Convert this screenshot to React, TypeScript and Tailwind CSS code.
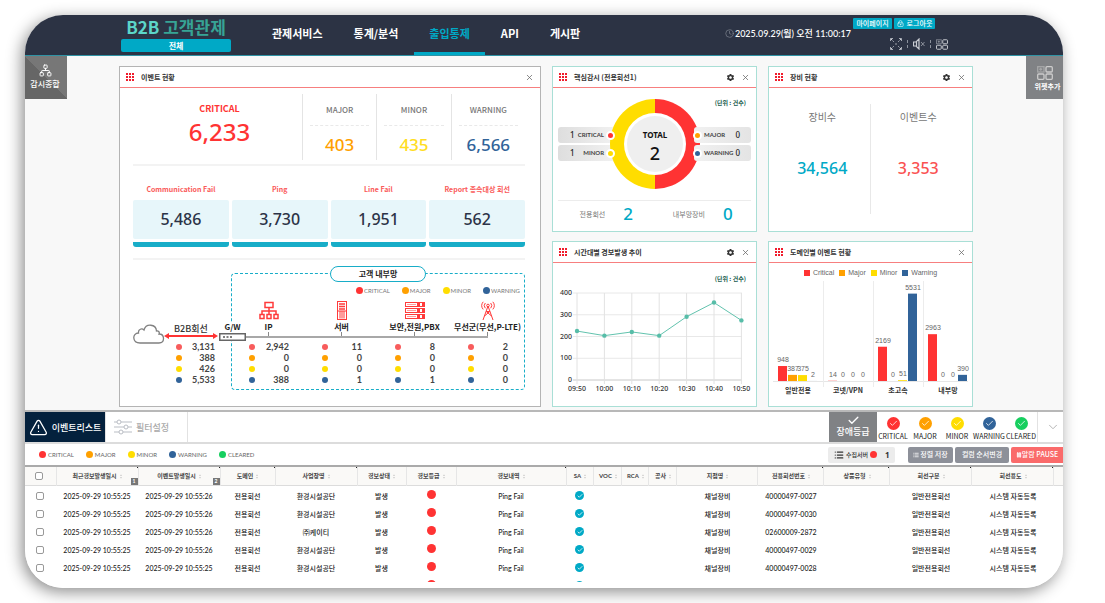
import { useState } from "react";
import type { ReactNode } from "react";
import clsx from "clsx";
import { Check, ChevronDown, Clock, List, LockKeyhole, Network, Pause, TriangleAlert, X } from "lucide-react";
import { MdSettings } from "react-icons/md";

const NUM = "font-['Noto_Sans','Noto_Sans_CJK_KR',sans-serif]";
const TXT = "font-['Lato','Noto_Sans_CJK_KR',sans-serif]";

const NAV = ["관제서비스", "통계/분석", "출입통제", "API", "게시판"];

const LEVELS = [
  { name: "CRITICAL", dot: "bg-[#ff3333]", soft: "bg-[#f85c5c]", fill: "#ff3333" },
  { name: "MAJOR", dot: "bg-[#ffa000]", soft: "bg-[#ffa000]", fill: "#ffa000" },
  { name: "MINOR", dot: "bg-[#ffdd00]", soft: "bg-[#ffdd00]", fill: "#ffdd00" },
  { name: "WARNING", dot: "bg-[#316399]", soft: "bg-[#316399]", fill: "#316399" },
  { name: "CLEARED", dot: "bg-[#17cf5f]", soft: "bg-[#17cf5f]", fill: "#17cf5f" },
];

function Panel({ title, gear, gray, children }: { title: string; gear?: boolean; gray?: boolean; children: ReactNode }) {
  return (
    <section className={clsx("flex min-h-[166px] flex-col border bg-white", gray ? "border-[#b4b4b4]" : "border-[#a9dfd6]")}>
      <header className="flex h-[21px] shrink-0 items-center border-b border-[#f77f7f] px-1.5">
        <svg viewBox="0 0 8 8" className="mr-[7px] size-2 text-[#f01c2c]" fill="currentColor">
          {[0, 3, 6].map((y) => [0, 3, 6].map((x) => <rect key={`${x}-${y}`} x={x} y={y} width="2" height="2" />))}
        </svg>
        <h2 className="flex-1 text-[7px] font-bold text-[#333]">{title}</h2>
        {gear && (
          <button type="button" aria-label="설정" className="mr-1.5 text-[#333]">
            <MdSettings className="size-[9px]" />
          </button>
        )}
        <button type="button" aria-label="닫기" className="text-[#666]">
          <X className="size-[9px]" strokeWidth={2} />
        </button>
      </header>
      {children}
    </section>
  );
}

function Stats({ values, className }: { values: string[]; className: string }) {
  return (
    <ul className={clsx("text-[9px] leading-[11px] font-bold text-[#444]", TXT, className)}>
      {values.map((v, i) => (
        <li key={i} className="flex items-center justify-between">
          <span className={clsx("size-[6px] rounded-full", LEVELS[i].soft)} />
          {v}
        </li>
      ))}
    </ul>
  );
}

/* ---------- 이벤트 현황 ---------- */

const SUMMARY = [
  { name: "MAJOR", value: "403", color: "text-[#ffa000]" },
  { name: "MINOR", value: "435", color: "text-[#ffdd22]" },
  { name: "WARNING", value: "6,566", color: "text-[#316399]" },
];

const KINDS = [
  ["Communication Fail", "5,486"],
  ["Ping", "3,730"],
  ["Line Fail", "1,951"],
  ["Report 종속대상 회선", "562"],
];

const icon = "h-[19px] w-5 text-[#ff3b3b]";

function LanIcon() {
  return (
    <svg viewBox="0 0 20 19" className={icon} fill="none" stroke="currentColor" strokeWidth="1.5">
      <rect x="6" y="1.5" width="8" height="5" />
      <path d="M10 6.500v7M3 13.500v-3.500h14v3.500" />
      <rect x="1" y="13.500" width="4" height="4" />
      <rect x="8" y="13.500" width="4" height="4" />
      <rect x="15" y="13.500" width="4" height="4" />
    </svg>
  );
}

function TowerIcon() {
  return (
    <svg viewBox="0 0 20 19" className={icon} fill="none" stroke="currentColor">
      <rect x="5.500" y="0.500" width="9" height="18" />
      <path d="M7 3h6M7 5.500h6M7 8h6" strokeWidth="1.300" />
      <rect x="7" y="10" width="6" height="7.500" fill="#ff9c9c" stroke="none" />
      <path d="M5.500 10h9" />
    </svg>
  );
}

function RackIcon() {
  return (
    <svg viewBox="0 0 20 19" className={icon} fill="none" stroke="currentColor">
      {[1.5, 7.5, 13.5].map((y) => (
        <g key={y}>
          <rect x="0.500" y={y} width="19" height="4" />
          <path d={`M2 ${y + 2}h9`} stroke="#ff9c9c" />
          <path d={`M12 ${y + 2}h3M17 ${y + 2}h2`} strokeWidth="3" />
        </g>
      ))}
    </svg>
  );
}

function AntennaIcon() {
  return (
    <svg viewBox="0 0 20 19" className={icon} fill="none" stroke="currentColor">
      <path d="M10 5 5 19M10 5l5 14M8.300 10.500l5.200 4.500M11.700 10.500 6.500 15M8.300 10.500h3.400" />
      <circle cx="10" cy="4.500" r="1.300" />
      <path d="M7.300 2a4 4 0 0 0 0 5.200M12.700 2a4 4 0 0 1 0 5.200M5.200 0.800a6 6 0 0 0 0 7.600M14.800 0.800a6 6 0 0 1 0 7.600" />
    </svg>
  );
}

const NODES = [
  { name: "IP", icon: <LanIcon />, values: ["2,942", "0", "0", "388"] },
  { name: "서버", icon: <TowerIcon />, values: ["11", "0", "0", "1"] },
  { name: "보안,전원,PBX", icon: <RackIcon />, values: ["8", "0", "0", "1"] },
  { name: "무선군(무선,P-LTE)", icon: <AntennaIcon />, values: ["2", "0", "0", "0"] },
];

function NetworkDiagram() {
  return (
    <div className="mt-[13px] flex">
      <div className="w-[98px] pt-[51px]">
        <div className="relative flex">
          <svg viewBox="0 0 32 20" className="w-8" fill="none" stroke="#808080" strokeWidth="1.300">
            <path d="M7 19C-1 19-1 9 5.500 9 5 5 9 4 11 6 13-1 23 0 23.500 7 25 6.500 27 8 26 10 32 10 32 19 26 19Z" />
          </svg>
          <svg viewBox="0 0 54 6" className="mt-[9px] ml-[-2px] h-1.5 w-[56px]">
            <path d="M4 3h46" stroke="#ff3333" strokeWidth="2" />
            <path d="M0 3 5 0v6ZM54 3 49 0v6Z" fill="#ff3333" />
          </svg>
          <span className="absolute left-[41px] top-0 text-[9px] font-medium text-[#333]">B2B회선</span>
        </div>
        <Stats values={["3,131", "388", "426", "5,533"]} className="ml-[43px] mr-4 -mt-[3px]" />
      </div>
      <div className="relative h-[117px] flex-1 rounded-[4px] border border-dashed border-[#18adc8]">
        <div className="absolute -top-2 left-1/2 w-24 -translate-x-1/2 rounded-full border border-[#18adc8] bg-white py-[3px] text-center text-[8px] font-bold text-[#222]">
          고객 내부망
        </div>
        <div className={clsx("mt-[13px] mr-1 flex justify-end gap-3 text-[6px] text-[#777]", TXT)}>
          {LEVELS.slice(0, 4).map((l) => (
            <span key={l.name} className="flex items-center gap-px">
              <i className={clsx("size-[7px] rounded-full", l.dot)} />
              {l.name}
            </span>
          ))}
        </div>
        <div className="absolute -left-[13px] top-[49px] flex w-[27px] flex-col items-center bg-white text-[8px] font-bold text-[#222]">
          <span className="pb-0.5">G/W</span>
          <svg viewBox="0 0 27 8" className="h-2 w-[27px]">
            <rect x="0.750" y="0.750" width="25.500" height="6.500" fill="#fff" stroke="#666" strokeWidth="1.500" />
            <path d="M4 4h2M7.500 4h2M11 4h2" stroke="#555" strokeWidth="1.500" />
          </svg>
        </div>
        <div className="mt-[7px] grid grid-cols-4">
          {NODES.map((n, i) => (
            <div key={n.name} className="flex flex-col items-center">
              {n.icon}
              <p className="mt-0.5 h-[9px] text-[8px] leading-[9px] font-bold whitespace-nowrap text-[#222]">{n.name}</p>
              <i className="mt-px h-1 w-px bg-[#888]" />
              <i
                className={clsx(
                  "h-0.5 bg-[#a8a8a8]",
                  i === 0 && "w-[60px] translate-x-[7px]",
                  i > 0 && i < 3 && "w-full",
                  i === 3 && "w-1/2 self-start",
                )}
              />
              <Stats values={n.values} className="mt-[3px] w-full pl-[17px] pr-4" />
            </div>
          ))}
        </div>
      </div>
    </div>
  );
}

function EventPanel() {
  return (
    <Panel title="이벤트 현황" gray>
      <div className="pt-1.5 pr-[15px] pl-[13px]">
        <div className="flex h-[66px] text-center">
          <div className="flex w-[169px] flex-col items-center pl-1 text-[#ff3333]">
            <h3 className="mt-[10px] text-[9px] font-bold">CRITICAL</h3>
            <p className={clsx("mt-[5px] text-[24px] leading-[28px] font-medium", NUM)}>6,233</p>
          </div>
          {SUMMARY.map((s) => (
            <div key={s.name} className="flex-1 border-l border-[#e4e4e4] px-[7px]">
              <h3 className="mt-3 border-b border-dashed border-[#e9e9e9] pb-[11px] text-[8px] font-medium text-[#777]">{s.name}</h3>
              <p className={clsx("mt-2 text-[17px] leading-[22px] font-medium", NUM, s.color)}>{s.value}</p>
            </div>
          ))}
        </div>
        <div className="mt-1 grid grid-cols-4 gap-[3px] border-y-2 border-[#f3f3f3] pt-[19px] pb-[11px] text-center">
          {KINDS.map(([name, value]) => (
            <div key={name}>
              <h3 className="h-[15px] text-[7px] leading-[8px] font-bold text-[#fa5a5a]">{name}</h3>
              <p className={clsx("rounded-[2px] bg-[#e7f6fa] text-[16px] leading-[39px] font-medium text-[#2c3347]", NUM)}>{value}</p>
              <i className="mt-[3px] block h-[5px] rounded-b-[3px] bg-[#18adc8]" />
            </div>
          ))}
        </div>
        <NetworkDiagram />
      </div>
    </Panel>
  );
}

/* ---------- 핵심감시 ---------- */

function Pill({ level, value, left }: { level: number; value: number; left?: boolean }) {
  return (
    <div
      className={clsx(
        "relative flex h-4 w-[57px] items-center justify-between rounded-[3px]",
        left ? "bg-linear-to-r from-[#dedede] to-[#f1f1f1] pl-3 pr-[11px]" : "flex-row-reverse bg-linear-to-l from-[#e4e4e4] to-[#f1f1f1] pl-[10px] pr-[11px]",
      )}
    >
      <b className={clsx("text-[8px] font-medium text-[#222]", NUM)}>{value}</b>
      <span className={clsx("text-[6px] font-bold text-[#444]", TXT)}>{LEVELS[level].name}</span>
      <i className={clsx("absolute z-10 size-[9px] rounded-full border-2 border-white", left ? "right-0" : "-left-px", LEVELS[level].dot)} />
    </div>
  );
}

function CorePanel() {
  return (
    <Panel title="핵심감시 (전용회선1)" gear>
      <div className="relative px-[5px]">
        <p className="absolute right-2.5 top-[12px] text-[6px] font-bold text-[#22604f]">(단위 : 건수)</p>
        <div className="relative flex h-[113px] items-center justify-between border-b border-[#ececec]">
          <div className="flex flex-col gap-0.5">
            <Pill level={0} value={1} left />
            <Pill level={2} value={1} left />
          </div>
          <svg viewBox="0 0 90 90" className="absolute inset-0 m-auto size-[90px]">
            <path d="M45 0a45 45 0 0 0 0 90Z" fill="#ffdd00" />
            <path d="M45 0a45 45 0 0 1 0 90Z" fill="#ff3333" />
            <circle cx="45" cy="45" r="31" fill="#fff" />
            <circle cx="45" cy="45" r="28" fill="#efefef" />
            <g textAnchor="middle" fill="#111" className={NUM}>
              <text x="45" y="39" className="text-[8px] font-bold">TOTAL</text>
              <text x="45" y="61" className="text-[18px] font-medium">2</text>
            </g>
          </svg>
          <div className="flex flex-col gap-0.5">
            <Pill level={1} value={0} />
            <Pill level={3} value={0} />
          </div>
        </div>
        <dl className="grid grid-cols-2 py-1 text-[7px] text-[#777]">
          {[["전용회선", "2"], ["내부망장비", "0"]].map(([k, v]) => (
            <div key={k} className="flex items-center justify-center gap-[18px]">
              <dt>{k}</dt>
              <dd className={clsx("text-[17px] leading-[18px] font-medium text-[#00a9c6]", NUM)}>{v}</dd>
            </div>
          ))}
        </dl>
      </div>
    </Panel>
  );
}

function DevicePanel() {
  return (
    <Panel title="장비 현황" gear>
      <dl className="mt-4 mb-[17px] grid flex-1 grid-cols-2 divide-x divide-[#e8e8e8] px-1.5 text-center text-[10px] text-[#777]">
        <div>
          <dt className="pt-2">장비수</dt>
          <dd className={clsx("pt-[38px] text-[16px] font-medium text-[#00a9c6]", NUM)}>34,564</dd>
        </div>
        <div>
          <dt className="pt-2">이벤트수</dt>
          <dd className={clsx("pt-[38px] text-[16px] font-medium text-[#fa5252]", NUM)}>3,353</dd>
        </div>
      </dl>
    </Panel>
  );
}

/* ---------- 차트 ---------- */

const TREND = [
  ["09:50", 225],
  ["10:00", 204],
  ["10:10", 221],
  ["10:20", 204],
  ["10:30", 291],
  ["10:40", 356],
  ["10:50", 274],
] as const;

function TrendPanel() {
  const px = (i: number) => 24 + i * 27.4;
  const py = (v: number) => 117 - v * 0.2175;
  return (
    <Panel title="시간대별 경보발생 추이" gear>
      <div className="relative">
        <p className="absolute right-2.5 top-[13px] text-[6px] font-bold text-[#22604f]">(단위 : 건수)</p>
        <svg viewBox="0 0 203 140" className={clsx("w-full text-[7px] font-medium", NUM)} fill="#333">
          <g stroke="#e2e2e2">
            {[0, 100, 200, 300, 400].map((v) => (
              <path key={v} d={`M20 ${py(v)}H189`} stroke={v === 0 ? "#c8c8c8" : "#e8e8e8"} />
            ))}
            {TREND.map(([t], i) => (
              <path key={t} d={`M${px(i)} 30V121`} />
            ))}
          </g>
          {[0, 100, 200, 300, 400].map((v) => (
            <text key={v} x="19" y={py(v) + 2} textAnchor="end">{v}</text>
          ))}
          <polyline points={TREND.map(([, v], i) => `${px(i)},${py(v)}`).join(" ")} fill="none" stroke="#62c3ae" />
          {TREND.map(([t, v], i) => (
            <g key={t}>
              <circle cx={px(i)} cy={py(v)} r="2.200" fill="#57bda8" />
              <text x={px(i)} y="128" textAnchor="middle">{t}</text>
            </g>
          ))}
        </svg>
      </div>
    </Panel>
  );
}

const DOMAINS = [
  { name: "일반전용", values: [948, 387, 375, 2] },
  { name: "코넷/VPN", values: [14, 0, 0, 0] },
  { name: "초고속", values: [2169, 0, 51, 5531] },
  { name: "내부망", values: [2963, 0, 0, 390] },
];

function DomainPanel() {
  return (
    <Panel title="도메인별 이벤트 현황">
      <div className="font-['Liberation_Sans',Arial,sans-serif] text-[7px] text-[#666]">
        <div className="mt-1.5 flex justify-center gap-[5px]">
          {["Critical", "Major", "Minor", "Warning"].map((n, i) => (
            <span key={n} className="flex items-center gap-[3px]">
              <i className={clsx("size-1.5", LEVELS[i].dot)} />
              {n}
            </span>
          ))}
        </div>
        <svg viewBox="0 0 203 120" className="w-full" textAnchor="middle">
          <path d="M4 105.500h195" stroke="#e6e6e6" />
          <path d="M54.500 5v106M104.500 5v106M154.500 5v106" stroke="#ececec" />
          {DOMAINS.map((d, g) => (
            <g key={d.name}>
              {d.values.map((v, i) => {
                const h = v * 0.0158;
                const x = 9 + g * 50 + i * 10;
                return (
                  <g key={i}>
                    <rect x={x} y={105 - h} width="9" height={h} fill={LEVELS[i].fill} />
                    <text x={x + 5} y={101 - h} fill="#666">{v}</text>
                  </g>
                );
              })}
              <text x={29 + g * 50} y="117" fill="#333" className="font-['Noto_Sans_CJK_KR',sans-serif] text-[7px] font-bold">{d.name}</text>
            </g>
          ))}
        </svg>
      </div>
    </Panel>
  );
}

/* ---------- 이벤트리스트 ---------- */

const COLUMNS = [
  { name: "최근경보발생일시", w: 82, badge: 1, mark: true },
  { name: "이벤트발생일시", w: 82, badge: 2, mark: true },
  { name: "도메인", w: 55, mark: true },
  { name: "사업장명", w: 82, mark: true },
  { name: "경보상태", w: 49 },
  { name: "경보등급", w: 50 },
  { name: "경보내역", w: 110, mark: true },
  { name: "SA", w: 28 },
  { name: "VOC", w: 28 },
  { name: "RCA", w: 27 },
  { name: "공사", w: 28 },
  { name: "지점명", w: 81 },
  { name: "전용회선번호", w: 66, mark: true },
  { name: "상품유형", w: 66, mark: true },
  { name: "회선구분", w: 82, mark: true },
  { name: "회선용도", w: 82, mark: true },
];

const ROWS = [
  ["2025-09-29 10:55:26", "환경시설공단", "40000497-0027"],
  ["2025-09-29 10:55:26", "환경시설공단", "40000497-0030"],
  ["2025-09-29 10:55:26", "㈜케이티", "02600009-2872"],
  ["2025-09-29 10:55:26", "환경시설공단", "40000497-0029"],
  ["2025-09-29 10:55:25", "환경시설공단", "40000497-0028"],
];

function AlarmDot() {
  return <i className="mx-auto -mt-1 block size-[9px] rounded-full bg-[#ff3333]" />;
}

function SaCheck() {
  return (
    <i className="mx-auto -mt-px flex size-[9px] items-center justify-center rounded-full bg-[#00a9c6] text-white">
      <Check className="size-1.5" strokeWidth={3} />
    </i>
  );
}

const checkbox = "block size-2 appearance-none rounded-[2px] border border-[#999] bg-white checked:bg-[#00a9c6] mx-auto";

function EventTable() {
  return (
    <div className="h-[117px] overflow-hidden border-t-2 border-[#aaa]">
      <table className={clsx("w-full table-fixed text-center text-[7px] font-medium text-[#222]", TXT)}>
        <colgroup>
          <col style={{ width: `${3100 / 1038}%` }} />
          {COLUMNS.map((c) => (
            <col key={c.name} style={{ width: `${(c.w * 100) / 1038}%` }} />
          ))}
          <col />
        </colgroup>
        <thead>
          <tr className="h-[18px] border-b border-[#dcdcdc] bg-[#faf9f7] text-[6px] text-[#444]">
            <th className="pr-0.5"><input type="checkbox" aria-label="전체 선택" className={checkbox} /></th>
            {COLUMNS.map((c) => (
              <th key={c.name} className="relative border-l border-[#e6e6e6] font-bold whitespace-nowrap">
                {c.name}
                <svg viewBox="0 0 3 6" className="ml-[3px] inline h-[5px] w-0.5" fill="#bbb">
                  <path d="M1.500 0 3 2H0ZM1.500 6 3 4H0Z" />
                </svg>
                {c.mark && <i className="absolute right-0 top-0 size-px bg-[#222]" />}
                {c.badge && (
                  <span className="absolute right-0 bottom-0 size-[7px] bg-[#777] text-[5px] leading-[7px] text-white">{c.badge}</span>
                )}
              </th>
            ))}
            <th className="border-l border-[#e6e6e6]" />
          </tr>
        </thead>
        <tbody>
          <tr className="h-0.5"><td colSpan={18} /></tr>
          {ROWS.map(([time, site, line]) => (
            <tr key={line} className="h-[18px]">
              <td className="pr-0.5"><input type="checkbox" aria-label={line} className={checkbox} /></td>
              <td>2025-09-29 10:55:25</td>
              <td>{time}</td>
              <td>전용회선</td>
              <td>{site}</td>
              <td>발생</td>
              <td><AlarmDot /></td>
              <td>Ping Fail</td>
              <td><SaCheck /></td>
              <td />
              <td />
              <td />
              <td>채널장비</td>
              <td>{line}</td>
              <td />
              <td>일반전용회선</td>
              <td>시스템 자동등록</td>
              <td />
            </tr>
          ))}
          <tr className="h-[18px]">
            <td colSpan={6} />
            <td><AlarmDot /></td>
            <td />
            <td><SaCheck /></td>
            <td colSpan={9} />
          </tr>
        </tbody>
      </table>
    </div>
  );
}

function EventList() {
  const [tab, setTab] = useState<"list" | "filter">("list");
  const tabCls = "flex items-center gap-1 border-r border-[#e2e2e2] text-[9px] font-medium";

  return (
    <section className="border-t-2 border-[#b8b8b8] bg-white pb-1.5">
      <div className="flex h-8 border-b-2 border-[#dcdcdc]">
        <button
          type="button"
          onClick={() => setTab("list")}
          className={clsx(tabCls, "w-[81px] justify-center", tab === "list" ? "bg-[#04213d] text-white" : "text-[#aaa]")}
        >
          <TriangleAlert className="size-[19px] shrink-0" strokeWidth={1.6} />
          <span className="whitespace-nowrap">이벤트리스트</span>
        </button>
        <button
          type="button"
          onClick={() => setTab("filter")}
          className={clsx(tabCls, "w-[82px] pl-2", tab === "filter" ? "bg-[#04213d] text-white" : "text-[#aaa]")}
        >
          <svg viewBox="0 0 18 16" className="h-4 w-[18px] text-[#b9bdc4]" fill="none" stroke="currentColor">
            <path d="M0 3h3M7 3h11M0 8h10M14 8h4M0 13h5M9 13h9" />
            <circle cx="5" cy="3" r="2" />
            <circle cx="12" cy="8" r="2" />
            <circle cx="7" cy="13" r="2" />
          </svg>
          필터설정
        </button>
        <div className="ml-auto flex">
          <button type="button" className="flex w-12 flex-col items-center justify-center bg-[#808285] pb-1 text-[9px] font-medium text-white">
            <Check className="size-[13px]" strokeWidth={2.5} />
            장애등급
          </button>
          <div className="flex items-center border-r border-[#e2e2e2] pt-0.5 text-[7px] text-[#222]">
            {LEVELS.map((l) => (
              <button type="button" key={l.name} className="flex w-8 flex-col items-center gap-[3px]">
                <i className={clsx("flex size-[13px] items-center justify-center rounded-full text-white", l.dot)}>
                  <Check className="size-[9px]" strokeWidth={2} />
                </i>
                {l.name}
              </button>
            ))}
          </div>
          <button type="button" aria-label="펼치기" className="w-[25px] pl-2 text-[#aaa]">
            <ChevronDown className="size-[14px]" strokeWidth={1.5} />
          </button>
        </div>
      </div>
      <div className="flex h-[21px] items-center pl-[14px]">
        <div className={clsx("flex flex-1 gap-3 text-[6px] text-[#666]", TXT)}>
          {LEVELS.map((l) => (
            <span key={l.name} className="flex items-center gap-0.5">
              <i className={clsx("size-[7px] rounded-full", l.dot)} />
              {l.name}
            </span>
          ))}
        </div>
        <div className="flex h-4 items-center text-[7px] font-medium text-white">
          <span className="mr-[13px] flex h-full w-[67px] items-center rounded-[2px] bg-[#ececec] pl-1.5 text-[6px] text-[#333]">
            <List className="mr-0.5 size-[10px]" strokeWidth={3} />
            수집서버
            <i className="ml-0.5 size-[7px] rounded-full bg-[#ff3333]" />
            <b className={clsx("ml-2 text-[8px] font-bold", NUM)}>1</b>
          </span>
          <button type="button" className="mr-0.5 flex h-full w-[45px] items-center justify-center gap-px rounded-[2px] bg-[#8d9099]">
            <List className="size-1.5" strokeWidth={3} />
            정렬 저장
          </button>
          <button type="button" className="mr-0.5 h-full w-[54px] rounded-[2px] bg-[#8d9099]">컬럼 순서변경</button>
          <button type="button" className="flex h-full w-[52px] items-center justify-center rounded-l-[2px] bg-[#fa6a6a]">
            <Pause className="size-1.5" fill="currentColor" />
            알람 PAUSE
          </button>
        </div>
      </div>
      <EventTable />
    </section>
  );
}

/* ---------- 레이아웃 ---------- */

function WidgetIcon({ className }: { className: string }) {
  return (
    <svg viewBox="0 0 16 14" className={className} fill="none" stroke="currentColor" strokeWidth="1.3">
      <rect x="0.700" y="0.700" width="6.300" height="5.300" opacity="0.500" />
      <path d="M3.750 1.750v3M2.250 3.250h3" opacity="0.500" />
      <rect x="9" y="0.700" width="6.300" height="5.300" rx="1" />
      <rect x="0.700" y="8" width="6.300" height="5.300" rx="1" />
      <rect x="9" y="8" width="6.300" height="5.300" rx="1" />
    </svg>
  );
}

function TopBar() {
  const [active, setActive] = useState("출입통제");
  return (
    <header className="flex h-[41px] border-b border-[#2f93a5] bg-[#2c3344] pl-24 text-white">
      <div className="mr-[26px] w-[110px] text-center">
        <h1 className="mt-[3px] text-[17px] leading-[18px] font-bold text-[#37a495]">
          <span className="text-[#5cd6c9]">B2B</span> 고객관제
        </h1>
        <button type="button" className="mt-[3px] block h-[13px] w-full rounded-[2px] bg-[#00a9c6] text-[8px] font-bold">
          전체
        </button>
      </div>
      <nav className="flex gap-px text-[11px] font-bold">
        {NAV.map((n) => (
          <a
            key={n}
            href="#"
            onClick={() => setActive(n)}
            className={clsx("flex items-center border-b-[3px] px-[15px] whitespace-nowrap", n === active ? "border-[#00a9c6] text-[#00a9c6]" : "border-transparent")}
          >
            {n}
          </a>
        ))}
      </nav>
      <div className="mr-[115px] ml-auto flex">
        <p className={clsx("mr-0.5 flex items-center pb-1 text-[9px] font-medium whitespace-nowrap", TXT)}>
          <Clock className="mr-px size-[9px] text-[#8b919c]" strokeWidth={1.6} />
          2025.09.29(월) 오전 11:00:17
        </p>
        <div className="pt-[3px] text-[7px] font-medium">
          <div className="mr-[13px] flex gap-0.5">
            <button type="button" className="h-[11px] w-[39px] rounded-[1px] bg-[#00a9c6] whitespace-nowrap">마이페이지</button>
            <button type="button" className="flex h-[11px] w-[41px] items-center justify-center gap-[3px] rounded-[1px] bg-[#00a9c6] whitespace-nowrap">
              <LockKeyhole className="size-[7px]" />
              로그아웃
            </button>
          </div>
          <div className="mt-[9px] flex items-center justify-end gap-[5px] text-[#c9ccd2]">
            <button type="button" aria-label="전체화면">
              <svg viewBox="0 0 12 12" className="size-3" fill="none" stroke="currentColor">
                <path d="M0.500 3v-2.500h2.500M9 0.500h2.500v2.500M11.500 9v2.500h-2.500M3 11.500h-2.500v-2.500" opacity="0.800" />
                <path d="M1 1l3 3M11 1 8 4M1 11l3-3M11 11 8 8" strokeDasharray="1.500 0.800" />
                <circle cx="6" cy="6" r="0.700" fill="currentColor" stroke="none" />
              </svg>
            </button>
            <i className="h-2 border-l border-dashed border-[#8b919c]" />
            <button type="button" aria-label="음소거">
              <svg viewBox="0 0 12 12" className="size-3" fill="none" stroke="currentColor">
                <path d="M0.500 4h2.500l3-3v10l-3-3h-2.500ZM3.500 4v4" strokeWidth="1.200" />
                <path d="M8 4l3.500 4M11.500 4 8 8" opacity="0.600" />
              </svg>
            </button>
            <i className="h-2 border-l border-dashed border-[#8b919c]" />
            <button type="button" aria-label="위젯">
              <WidgetIcon className="h-[11px] w-[12px]" />
            </button>
          </div>
        </div>
      </div>
    </header>
  );
}

export default function App() {
  return (
    <div className="bg-white pt-[15px] pr-[42px] pb-[15px] pl-[25px] font-['Noto_Sans_CJK_KR',sans-serif] leading-none">
      <div className="overflow-hidden rounded-[38px] bg-[#f8f8f8] shadow-[-3px_4px_16px_rgba(0,0,0,0.45)]">
        <TopBar />
        <div className="flex items-start">
          <button type="button" className="flex h-[43px] w-[42px] shrink-0 flex-col items-center justify-center gap-[3px] bg-linear-to-tr from-[#666] from-50% to-[#777] to-50% pr-0.5 pb-1 text-[8px] font-medium text-white">
            <Network className="size-[13px]" strokeWidth={1.8} />
            감시종합
          </button>
          <main className="mt-2.5 mr-[53px] mb-[3px] ml-[52px] grid flex-1 grid-cols-[422fr_205fr_205fr] gap-x-[11px]">
            <EventPanel />
            <div className="grid gap-[9px]">
              <CorePanel />
              <TrendPanel />
            </div>
            <div className="grid gap-[9px]">
              <DevicePanel />
              <DomainPanel />
            </div>
          </main>
          <button type="button" className="flex h-[43px] w-[37px] shrink-0 flex-col items-center justify-center gap-[3px] bg-[#808285] text-[7px] font-bold text-white">
            <WidgetIcon className="h-[14px] w-4 text-[#ccc]" />
            <span className="pl-1.5 whitespace-nowrap">위젯추가</span>
          </button>
        </div>
        <EventList />
      </div>
    </div>
  );
}
